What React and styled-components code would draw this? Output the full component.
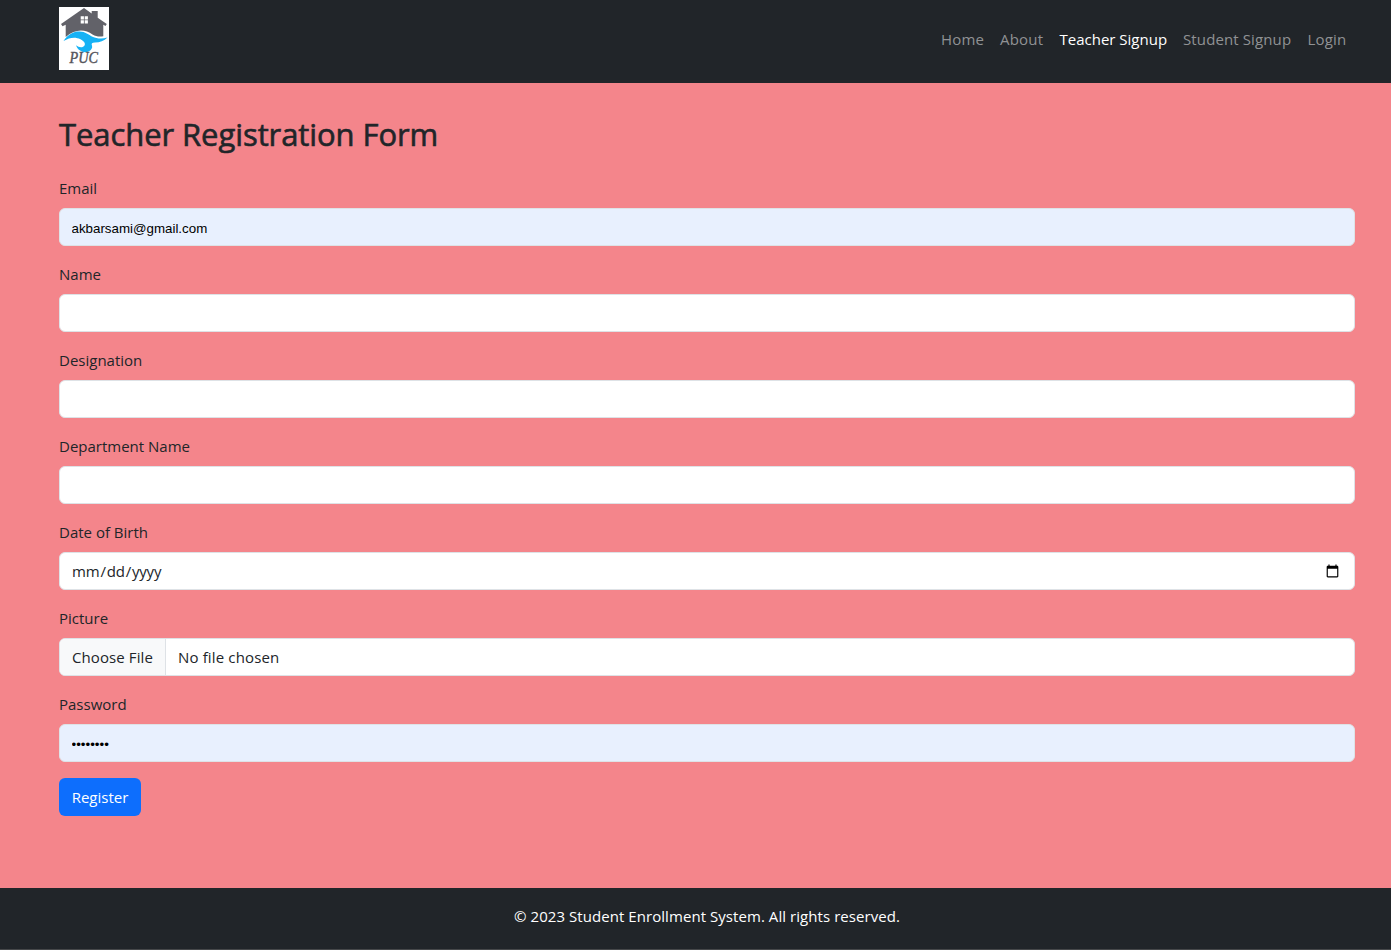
import React from "react";
import styled, { createGlobalStyle } from "styled-components";

const GlobalStyle = createGlobalStyle`
  *, *::before, *::after { box-sizing: border-box; }
  body {
    margin: 0;
    background: #f4858b;
    color: #212529;
    font-family: "Open Sans", "Noto Sans", sans-serif;
    font-size: 15px;
    line-height: 24px;
  }
`;

const Page = styled.div`
  display: flex;
  flex-direction: column;
  height: 950px;
  overflow: hidden;
`;

const Navbar = styled.header`
  display: flex;
  justify-content: space-between;
  align-items: flex-start;
  height: 83px;
  padding: 7px 36px 0 59px;
  background: #212529;
`;

const Logo = styled.svg`
  display: block;
  width: 50px;
  height: 63px;
`;

const Nav = styled.nav`
  display: flex;
  padding-top: 12px;
`;

const NavLink = styled.a`
  width: ${(p) => p.$width}px;
  padding: 8px 0 8px 8px;
  line-height: 24px;
  white-space: nowrap;
  letter-spacing: ${(p) => p.$spacing || 0}px;
  color: ${(p) => (p.$active ? "#fff" : "#909294")};
  text-decoration: none;
`;

const Main = styled.main`
  flex: 1;
  padding: 32px 36px 0 59px;
`;

const Title = styled.h2`
  margin: 0 0 22px;
  font-size: 31px;
  font-weight: 400;
  line-height: 39px;
  letter-spacing: -0.08px;
  -webkit-text-stroke: 0.6px #212529;
`;

const Field = styled.div`
  margin-bottom: 16px;
`;

const Label = styled.label`
  display: block;
  height: 32px;
  line-height: 24px;
`;

const Input = styled.input`
  display: block;
  width: 100%;
  height: 38px;
  padding: ${(p) => (p.$filled ? "8px 12px 6px 11.5px" : "6px 12px")};
  border: 1px solid #dee2e6;
  border-radius: 6px;
  outline: 0;
  background: ${(p) => (p.$filled ? "#e8f0fe" : "#fff")};
  color: ${(p) => (p.$filled ? "#000" : "#212529")};
  font: ${(p) => (p.$filled ? '13.333px "Liberation Sans", Arial, sans-serif' : "15px/24px 'Open Sans', sans-serif")};

  &[type="date"] {
    padding-left: 11px;
    letter-spacing: -0.2px;
  }
  &[type="file"] {
    overflow: hidden;
    letter-spacing: 0.15px;
  }
  &::file-selector-button {
    height: 38px;
    margin: -7px 12px -7px -12px;
    padding: 6px 12px;
    border: 0 solid #dee2e6;
    border-right-width: 1px;
    background: #f8f9fa;
    color: #212529;
    font: inherit;
    letter-spacing: 0.1px;
  }
`;

const Button = styled.button`
  display: block;
  width: 82px;
  height: 38px;
  padding: 0;
  border: 0;
  border-radius: 6px;
  background: #0d6efd;
  color: #fff;
  font: 15px/24px "Open Sans", sans-serif;
`;

const Footer = styled.footer`
  height: 62px;
  padding: 16px 0 0 23px;
  border-bottom: 1px solid #46484a;
  background: #212529;
  color: #fff;
  letter-spacing: 0.06px;
  text-align: center;
`;

const links = [
  { text: "Home", width: 59, spacing: 0.2 },
  { text: "About", width: 59.5, spacing: 0.2 },
  { text: "Teacher Signup", width: 123.5, active: true },
  { text: "Student Signup", width: 124.5, spacing: 0.12 },
  { text: "Login", width: 55.5, spacing: 0.2 },
];

const fields = [
  { id: "email", label: "Email", type: "email", value: "akbarsami@gmail.com" },
  { id: "name", label: "Name", type: "text" },
  { id: "designation", label: "Designation", type: "text" },
  { id: "department", label: "Department Name", type: "text" },
  { id: "birth", label: "Date of Birth", type: "date" },
  { id: "picture", label: "Picture", type: "file" },
  { id: "password", label: "Password", type: "password", value: "password" },
];

function HouseLogo() {
  return (
    <Logo viewBox="0 0 50 63" aria-label="PUC">
      <rect width="50" height="63" fill="#fff" />
      <path d="M25 1 32.700 6.500V4h6v6.700L47.800 17l-1.300 2-2.200-1.200V29.300C40 30 37 29.500 33.500 27.500 26 22 16.500 21.500 6.700 30V17.800L3.500 19.300 2 17z" fill="#626269" />
      <path d="M21.700 9.200h3.200v3.200h-3.200zm4 0h3.200v3.200h-3.200zM21.700 13.200h3.200v3.300h-3.200zm4 0h3.200v3.300h-3.200z" fill="#fff" />
      <path d="M4.500 34C9.500 27 14 24.500 20.500 24.500c6 0 9 3.300 13 5.200 4.500 2 9.500 2.300 15 .8-3.500 3.500-7.500 5-12.500 5-3 0-4 1-3 3.300.8 2.200-.8 4.200-3 5.500-4.500 2.200-11 0-13-6 3 2.500 7 2.700 8.500.2 1.200-2.200-.5-4.500-4-6.300-5.500-2.700-11-1.700-17 1.800z" fill="#16b2f5" />
      <text x="10.500" y="56" fontFamily="Liberation Serif, serif" fontSize="16.500" fontStyle="italic" fill="#55555c" stroke="#55555c" strokeWidth=".4" textLength="28.500" lengthAdjust="spacingAndGlyphs">PUC</text>
    </Logo>
  );
}

export default function App() {
  return (
    <Page>
      <GlobalStyle />
      <Navbar>
        <HouseLogo />
        <Nav>
          {links.map((l) => (
            <NavLink key={l.text} $width={l.width} $spacing={l.spacing} $active={l.active}>{l.text}</NavLink>
          ))}
        </Nav>
      </Navbar>
      <Main>
        <Title>Teacher Registration Form</Title>
        {fields.map((f) => (
          <Field key={f.id}>
            <Label htmlFor={f.id}>{f.label}</Label>
            <Input id={f.id} type={f.type} defaultValue={f.value} $filled={Boolean(f.value)} />
          </Field>
        ))}
        <Button type="button">Register</Button>
      </Main>
      <Footer>© 2023 Student Enrollment System. All rights reserved.</Footer>
    </Page>
  );
}
